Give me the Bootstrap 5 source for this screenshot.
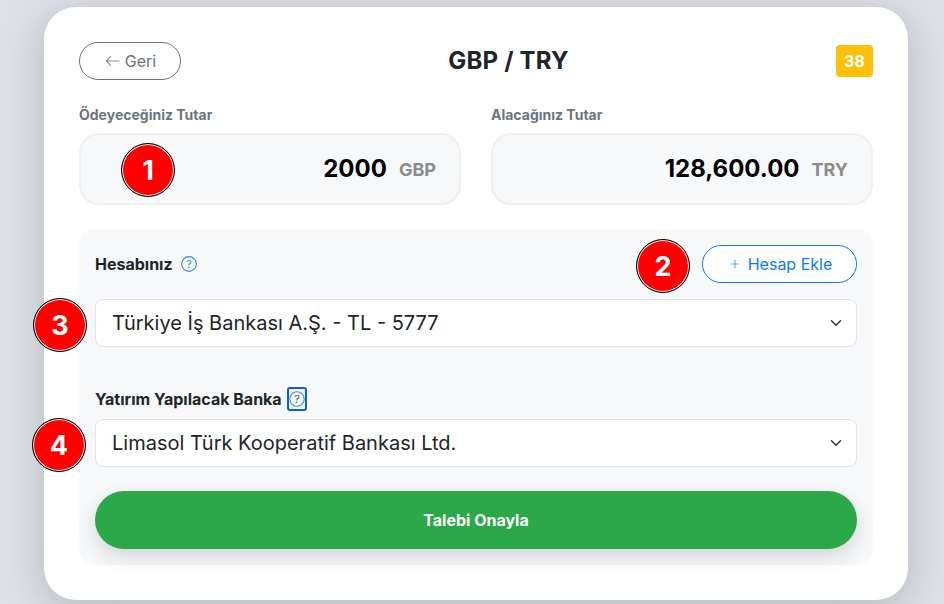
<!DOCTYPE html>
<html lang="tr">
<head>
<meta charset="utf-8">
<title>GBP / TRY</title>
<link href="https://cdn.jsdelivr.net/npm/bootstrap@5.3.0/dist/css/bootstrap.min.css" rel="stylesheet">
<style>
html,body{height:604px;overflow:hidden}
body{font-family:Inter,"Liberation Sans",sans-serif;background:#dee1e6;color:#212529}
.page-wrap{padding:7px 36px 0 44px}
.main-panel{height:593px;background:#fff;border-radius:32px;padding:35px;box-shadow:0 8px 40px rgba(100,105,115,.35)}
.head-row{height:38px;margin-bottom:27px}
.back-btn{width:102px;height:38px;padding:0 0 0 1px;border:1px solid #6c757d;border-radius:19px;color:#6c757d;font-size:16px;background:#fff;line-height:1}
.back-btn svg{margin-right:5px}
.pair-title{font-size:24px;font-weight:700;margin:0;line-height:38px;letter-spacing:.2px}
.count-tag{width:37px;height:32px;background:#ffc107;color:#fff;font-size:16px;font-weight:700;border-radius:4px}
.amount-grid{column-gap:30px;margin-bottom:24px}
.amount-col{flex:0 0 382px;position:relative}
.amount-label{display:block;font-size:14px;font-weight:700;color:#6c757d;line-height:16px;margin-bottom:10px}
.amount-box{height:72px;background:#f7f8fa;border:2px solid #eef0f2;border-radius:20px;padding:0 23px 0 0}
.amount-val{font-size:24px;font-weight:700;color:#000;margin-right:12px}
.amount-cur{font-size:18px;font-weight:700;color:#8c8c8c}
.form-area{background:#f7f8fa;border-radius:16px;padding:16px;height:336px;position:relative}
.acct-row{height:38px;margin-bottom:16px}
.field-label{font-size:16px;font-weight:700;margin:0;color:#212529;line-height:1}
.help-mark{width:16px;height:16px;margin-left:8px;flex:none}
.help-box{margin-left:5px;width:20px;height:24px;border:2px solid #0b5ed7;border-radius:3px}
.help-box .help-mark{margin:0}
.add-btn{width:155px;height:38px;padding:0 0 0 3px;border:1px solid #0d7bf2;border-radius:19px;background:#fff;color:#0d7bf2;font-size:16px;line-height:1}
.add-btn svg{margin-right:8px}
.bank-select{height:48px;font-size:20px;color:#212529;padding:0 36px 0 16px;border-color:#e0e3e9;border-radius:8px;background-color:#fff;font-family:inherit}
.bank-gap{margin-bottom:40px}
.bank-label-row{height:24px;margin-bottom:8px}
.submit-btn{display:block;width:100%;height:58px;margin-top:24px;border:0;border-radius:29px;background:#2ba847;color:#fff;font-size:16px;font-weight:700;box-shadow:0 8px 20px rgba(0,0,0,.14)}
.step-pin{position:absolute;width:54px;height:54px;border-radius:50%;background:#f00;color:#fff;font-size:27px;font-weight:700;line-height:1;border:1.5px solid #000;box-shadow:inset 0 0 0 1px #fff;z-index:2}
.pin-1{left:40px;top:8px}
.pin-2{left:557px;top:10px}
.pin-3{left:-46px;top:69px}
.pin-4{left:-47px;top:189px}
</style>
</head>
<body>
<div class="page-wrap">
  <div class="main-panel">
    <div class="head-row d-flex align-items-center justify-content-between">
      <button type="button" class="back-btn d-flex align-items-center justify-content-center">
        <svg width="15" height="12" viewBox="0 0 15 12" fill="none" stroke="#8a929a" stroke-width="1.2"><path d="M14.5 6H1.2M6 1.2 1.2 6 6 10.8"/></svg>Geri
      </button>
      <h1 class="pair-title">GBP / TRY</h1>
      <span class="count-tag d-flex align-items-center justify-content-center">38</span>
    </div>

    <div class="amount-grid d-flex">
      <div class="amount-col">
        <label class="amount-label">Ödeyeceğiniz Tutar</label>
        <div class="amount-box d-flex align-items-center justify-content-end position-relative">
          <span class="amount-val">2000</span><span class="amount-cur">GBP</span>
          <span class="step-pin pin-1 d-flex align-items-center justify-content-center">1</span>
        </div>
      </div>
      <div class="amount-col">
        <label class="amount-label">Alacağınız Tutar</label>
        <div class="amount-box d-flex align-items-center justify-content-end">
          <span class="amount-val">128,600.00</span><span class="amount-cur">TRY</span>
        </div>
      </div>
    </div>

    <div class="form-area">
      <span class="step-pin pin-2 d-flex align-items-center justify-content-center">2</span>
      <span class="step-pin pin-3 d-flex align-items-center justify-content-center">3</span>
      <span class="step-pin pin-4 d-flex align-items-center justify-content-center">4</span>

      <div class="acct-row d-flex align-items-center justify-content-between">
        <div class="d-flex align-items-center">
          <label class="field-label">Hesabınız</label>
          <svg class="help-mark" viewBox="0 0 16 16"><circle cx="8" cy="8" r="7.4" fill="none" stroke="#2b8af5" stroke-width="1.1"/><text x="8" y="11.8" text-anchor="middle" font-size="11" font-family="Inter" fill="#2b8af5">?</text></svg>
        </div>
        <button type="button" class="add-btn d-flex align-items-center justify-content-center">
          <svg width="10" height="10" viewBox="0 0 10 10" fill="none" stroke="#6fb0f7" stroke-width="1.2"><path d="M5 .8v8.4M.8 5h8.4"/></svg>Hesap Ekle
        </button>
      </div>
      <select class="form-select bank-select bank-gap">
        <option>Türkiye İş Bankası A.Ş. - TL - 5777</option>
      </select>

      <div class="bank-label-row d-flex align-items-center">
        <label class="field-label">Yatırım Yapılacak Banka</label>
        <span class="help-box d-flex align-items-center justify-content-center">
          <svg class="help-mark" viewBox="0 0 16 16"><circle cx="8" cy="8" r="7.2" fill="none" stroke="#2b8af5" stroke-width="1.1"/><text x="8" y="11.8" text-anchor="middle" font-size="11" font-family="Inter" fill="#4a5560">?</text></svg>
        </span>
      </div>
      <select class="form-select bank-select">
        <option>Limasol Türk Kooperatif Bankası Ltd.</option>
      </select>

      <button type="button" class="submit-btn">Talebi Onayla</button>
    </div>
  </div>
</div>
<script src="https://cdn.jsdelivr.net/npm/bootstrap@5.3.0/dist/js/bootstrap.bundle.min.js"></script>
</body>
</html>
